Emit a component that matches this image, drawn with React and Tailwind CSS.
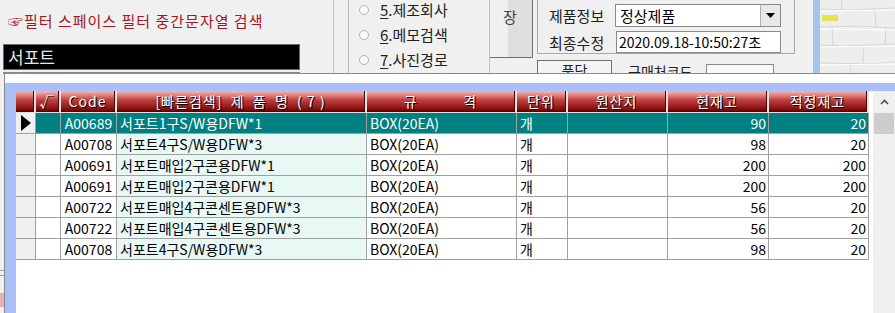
import React from "react";

const COLS = ["w-[20px]", "w-[25px]", "w-[56px]", "w-[250px]", "w-[150px]", "w-[51px]", "w-[100px]", "w-[101px]", "w-[100px]"];

const HEADERS = ["", "√", "Code", "[빠른검색]  제  품  명  ( 7 )", "규           격", "단위", "원산지", "현재고", "적정재고"];

// code, name, spec, unit, origin, stock, proper stock
const ROWS = [
  ["A00689", "서포트1구S/W용DFW*1", "BOX(20EA)", "개", "", "90", "20"],
  ["A00708", "서포트4구S/W용DFW*3", "BOX(20EA)", "개", "", "98", "20"],
  ["A00691", "서포트매입2구콘용DFW*1", "BOX(20EA)", "개", "", "200", "200"],
  ["A00691", "서포트매입2구콘용DFW*1", "BOX(20EA)", "개", "", "200", "200"],
  ["A00722", "서포트매입4구콘센트용DFW*3", "BOX(20EA)", "개", "", "56", "20"],
  ["A00722", "서포트매입4구콘센트용DFW*3", "BOX(20EA)", "개", "", "56", "20"],
  ["A00708", "서포트4구S/W용DFW*3", "BOX(20EA)", "개", "", "98", "20"],
];

function Radio({ num, label }) {
  return (
    <div className="flex items-center h-[25px] pl-[10px]">
      <svg width="10" height="10" viewBox="0 0 10 10">
        <circle cx="5" cy="5" r="4.5" fill="#fafafa" stroke="#b4b4b4" />
      </svg>
      <span className="ml-[11px] text-[15px] leading-none text-[#202020]">
        <span className="underline underline-offset-2">{num}</span>.{label}
      </span>
    </div>
  );
}

function Brick() {
  return (
    <svg width="75" height="74" viewBox="0 0 75 74" className="block">
      <rect width="75" height="74" fill="#eeeeee" />
      <g stroke="#d6d6d6" strokeWidth="1" fill="none">
        <path d="M0 9 L30 10 L75 8" />
        <path d="M0 27 L40 26 L75 28" />
        <path d="M0 45 L25 46 L75 44" />
        <path d="M0 63 L50 64 L75 62" />
        <path d="M22 0 L21 9" />
        <path d="M55 9 L56 27" />
        <path d="M12 27 L13 45" />
        <path d="M44 45 L43 63" />
        <path d="M30 63 L31 74" />
        <path d="M66 27 L65 45" />
      </g>
      <g stroke="#ffffff" strokeWidth="1" fill="none">
        <path d="M0 11 L75 10" />
        <path d="M0 29 L75 30" />
        <path d="M0 47 L75 46" />
        <path d="M0 65 L75 64" />
      </g>
      <rect x="2" y="15" width="16" height="6" fill="#e4e44a" />
    </svg>
  );
}

function Cell({ i, sel, align = "left", bg = "bg-white", children }) {
  const alignCls = align === "right" ? "justify-end pr-[2px]" : align === "center" ? "justify-center" : "justify-start pl-[3px]";
  return (
    <div
      className={`${COLS[i]} shrink-0 h-[21px] border-r border-b border-[#a0a0a0] flex items-center overflow-hidden whitespace-nowrap text-[14px] leading-none ${alignCls} ${
        sel ? "bg-[#008080] text-white" : `${bg} text-black`
      }`}
    >
      {children}
    </div>
  );
}

export default function App() {
  return (
    <div className="relative w-[895px] h-[313px] overflow-hidden bg-[#f0f0f0] font-['Noto_Sans_CJK_KR','Noto_Sans',sans-serif]">
      {/* background search form */}
      <div className="flex h-[74px] overflow-hidden">
        <div className="w-[333px] shrink-0 flex flex-col">
          <div className="h-[20px] mt-[11px] pl-[8px] flex items-center text-[15px] tracking-[1px] text-[#a8141e] whitespace-pre">
            ☞필터 스페이스 필터 중간문자열 검색
          </div>
          <div className="ml-[3px] mt-[13px] w-[297px] h-[26px] bg-black border border-[#6a6a6a] flex items-center pl-[4px] text-[17px] text-[#e6e6e6]">
            서포트
          </div>
          <div className="ml-[3px] mt-[2px] w-[297px] h-[10px] bg-white border border-[#8a8a8a]" />
        </div>
        <div className="w-[15px] shrink-0 border-l border-[#c4c4c4]" />
        <div className="w-[141px] shrink-0 border-l border-[#b8b8b8] flex flex-col mt-[-3px]">
          <Radio num="5" label="제조회사" />
          <Radio num="6" label="메모검색" />
          <Radio num="7" label="사진경로" />
        </div>
        <div className="w-[44px] shrink-0 border-l border-[#c0c0c0] flex flex-col">
          <div className="h-[58px] bg-[linear-gradient(to_right,#f0f0f0_18px,#dedede_18px)] border-r border-b border-[#6e6e6e] pl-[13px] pt-[9px] text-[15px] leading-none text-[#404040]">
            장
          </div>
        </div>
        <div className="w-[4px] shrink-0" />
        <div className="w-[258px] shrink-0 flex flex-col">
          <div className="h-[58px] border-l border-b border-r border-[#a8a8a8] flex flex-col pt-[4px] gap-[4px]">
            <div className="flex items-center h-[23px]">
              <div className="w-[77px] pl-[11px] text-[15px] leading-none text-[#202020]">제품정보</div>
              <div className="w-[166px] h-[23px] bg-white border border-[#8a8a8a] flex items-center">
                <span className="flex-1 pl-[4px] text-[15px] leading-none text-black">정상제품</span>
                <div className="w-[20px] h-[21px] bg-[#e8e8e8] border-l border-[#b0b0b0] flex items-center justify-center">
                  <svg width="9" height="5" viewBox="0 0 9 5">
                    <polygon points="0,0 9,0 4.5,5" fill="#000" />
                  </svg>
                </div>
              </div>
            </div>
            <div className="flex items-center h-[22px]">
              <div className="w-[78px] pl-[11px] text-[15px] leading-none text-[#202020]">최종수정</div>
              <div className="w-[165px] h-[22px] bg-white border border-[#8a8a8a] flex items-center pl-[2px] text-[14px] leading-none text-black whitespace-nowrap">
                2020.09.18-10:50:27초
              </div>
            </div>
          </div>
          <div className="flex mt-[6px]">
            <div className="w-[75px] h-[14px] bg-[#f4f4f4] border border-[#707070] flex justify-center pt-[2px] text-[14px] leading-none text-[#202020]">
              품단
            </div>
            <div className="ml-[16px] mt-[4px] text-[14px] leading-none text-[#202020]">구매처코드</div>
            <div className="ml-[14px] mt-[4px] w-[68px] h-[10px] bg-[#f8f8f8] border border-[#8a8a8a]" />
          </div>
        </div>
        <div className="w-[18px] shrink-0" />
        <div className="w-[7px] shrink-0 bg-[#a6c4ea]" />
        <div className="flex-1">
          <Brick />
        </div>
      </div>

      {/* left strip remains of background under the popup */}
      <div className="w-[4px] flex flex-col">
        <div className="h-[196px]" />
        <div className="h-[1px] bg-[#a0a0a0]" />
        <div className="h-[4px]" />
        <div className="h-[1px] bg-[#a0a0a0]" />
        <div className="h-[17px]" />
        <div className="h-[14px] bg-[#e8b0b0]" />
      </div>

      {/* product search popup */}
      <div className="absolute left-[4px] top-[73px] right-0 bottom-0 flex flex-col border-t border-l border-[#8a8a8a] bg-white">
        <div className="h-[9px] shrink-0 bg-white" />
        <div className="flex-1 flex flex-col bg-[#aabff6] pl-[11px] pt-[8px]">
          <div className="flex-1 flex bg-white">
            <div className="flex flex-col">
              <div className="flex h-[22px]">
                {HEADERS.map((h, i) => (
                  <div key={i} className={`${COLS[i]} shrink-0 h-[22px] pr-[2px] pb-[1px] bg-[#e2e2e2]`}>
                    <div className="h-full bg-linear-to-b from-[#f2b8b8] via-[#c23e3e] via-45% to-[#760000] border-r border-b border-[#4e0000] flex items-center justify-center whitespace-pre text-[14px] tracking-[1px] leading-none text-white [text-shadow:1px_1px_0_#000]">
                      {h}
                    </div>
                  </div>
                ))}
              </div>
              {ROWS.map((r, ri) => {
                const sel = ri === 0;
                return (
                  <div key={ri} className="flex">
                    <div className={`${COLS[0]} shrink-0 h-[21px] border-r border-b border-[#a0a0a0] bg-[#f0f0f0] flex items-center justify-center`}>
                      {sel && (
                        <svg width="10" height="16" viewBox="0 0 10 16">
                          <polygon points="0,0 10,8 0,16" fill="#000" />
                        </svg>
                      )}
                    </div>
                    <Cell i={1} sel={sel} />
                    <Cell i={2} sel={sel} align="center">{r[0]}</Cell>
                    <Cell i={3} sel={sel} bg="bg-[#e8f8f4]">{r[1]}</Cell>
                    <Cell i={4} sel={sel}>{r[2]}</Cell>
                    <Cell i={5} sel={sel}>{r[3]}</Cell>
                    <Cell i={6} sel={sel}>{r[4]}</Cell>
                    <Cell i={7} sel={sel} align="right">{r[5]}</Cell>
                    <Cell i={8} sel={sel} align="right">{r[6]}</Cell>
                  </div>
                );
              })}
            </div>
            <div className="w-[4px] shrink-0" />
            <div className="w-[22px] shrink-0 flex flex-col bg-[#f0f0f0]">
              <div className="h-[22px] flex items-center justify-center">
                <svg width="9" height="6" viewBox="0 0 9 6">
                  <polyline points="1,5 4.5,1.5 8,5" fill="none" stroke="#505050" strokeWidth="1.6" />
                </svg>
              </div>
              <div className="h-[21px] mx-[1px] bg-[#cdcdcd]" />
            </div>
          </div>
        </div>
      </div>
    </div>
  );
}
